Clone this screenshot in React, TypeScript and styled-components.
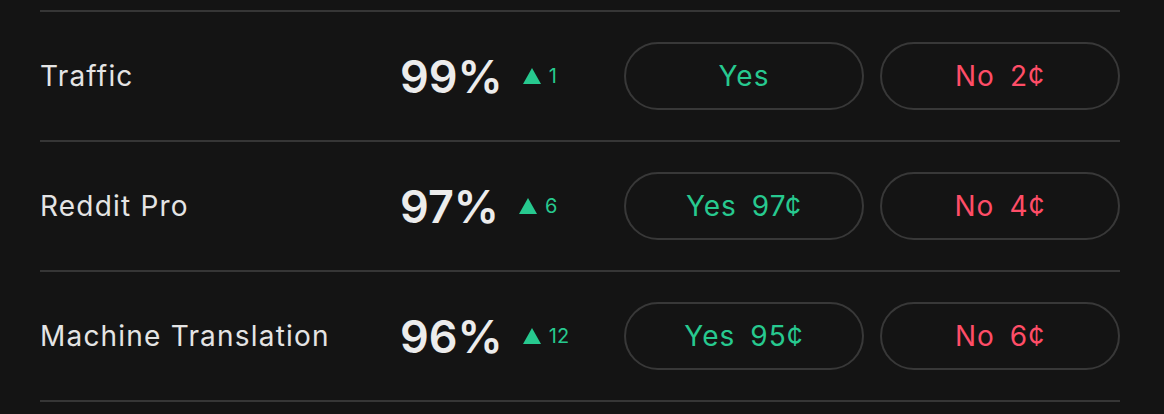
import React from "react";
import styled, { createGlobalStyle } from "styled-components";

const Global = createGlobalStyle`
  html, body {
    margin: 0;
    padding: 0;
    background: #141414;
  }
  body {
    font-family: Inter, "Noto Sans", sans-serif;
    -webkit-font-smoothing: antialiased;
  }
`;

const Page = styled.div`
  box-sizing: border-box;
  width: 1164px;
  height: 414px;
  padding: 10px 44px 0 40px;
  background: #141414;
`;

const List = styled.div`
  display: flex;
  flex-direction: column;
  border-bottom: 2px solid #363636;
`;

const Row = styled.div`
  display: flex;
  align-items: center;
  height: 130px;
  box-sizing: border-box;
  border-top: 2px solid #363636;
`;

const Label = styled.div`
  flex: 1;
  font-size: 28px;
  font-weight: 400;
  color: #e4e4e4;
  letter-spacing: 1.2px;
`;

const Stat = styled.div`
  width: 224px;
  display: flex;
  align-items: center;
  gap: 20px;
`;

const Percent = styled.span`
  font-size: 45px;
  font-weight: 600;
  color: #ececec;
  letter-spacing: 0;
`;

const Change = styled.span`
  display: flex;
  align-items: center;
  gap: 8px;
  color: #27c98f;
  font-size: 20px;
  font-weight: 400;
`;

const Triangle = styled.span`
  width: 0;
  height: 0;
  border-left: 9.5px solid transparent;
  border-right: 9.5px solid transparent;
  border-bottom: 16px solid #27c98f;
`;

const Buttons = styled.div`
  display: flex;
  gap: 16px;
`;

const Btn = styled.button<{ $tone: "yes" | "no" }>`
  box-sizing: border-box;
  width: 240px;
  height: 68px;
  border: 2px solid #383838;
  border-radius: 34px;
  background: transparent;
  display: flex;
  align-items: center;
  justify-content: center;
  gap: 15px;
  font-family: Inter, "Noto Sans", sans-serif;
  font-size: 28px;
  font-weight: 400;
  letter-spacing: 1px;
  color: ${(p) => (p.$tone === "yes" ? "#27c98f" : "#ff4d67")};
  cursor: pointer;
`;

type Item = {
  label: string;
  pct: number;
  change: number;
  yes: string | null;
  no: string;
};

const items: Item[] = [
  { label: "Traffic", pct: 99, change: 1, yes: null, no: "2¢" },
  { label: "Reddit Pro", pct: 97, change: 6, yes: "97¢", no: "4¢" },
  { label: "Machine Translation", pct: 96, change: 12, yes: "95¢", no: "6¢" },
];

export default function App() {
  return (
    <Page>
      <Global />
      <List>
        {items.map((it) => (
          <Row key={it.label}>
            <Label>{it.label}</Label>
            <Stat>
              <Percent>{it.pct}%</Percent>
              <Change>
                <Triangle />
                {it.change}
              </Change>
            </Stat>
            <Buttons>
              <Btn $tone="yes">
                <span>Yes</span>
                {it.yes && <span>{it.yes}</span>}
              </Btn>
              <Btn $tone="no">
                <span>No</span>
                <span>{it.no}</span>
              </Btn>
            </Buttons>
          </Row>
        ))}
      </List>
    </Page>
  );
}
